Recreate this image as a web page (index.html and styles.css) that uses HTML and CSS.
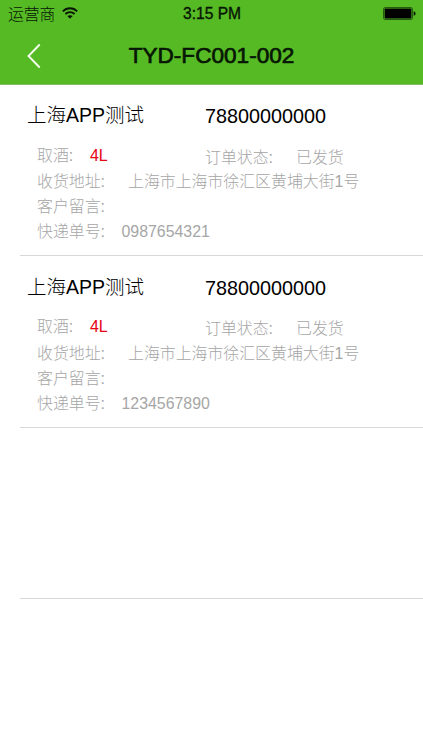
FILE: index.html
```html
<!DOCTYPE html>
<html lang="zh-CN">
<head>
<meta charset="utf-8">
<meta name="viewport" content="width=device-width, initial-scale=1">
<title>TYD-FC001-002</title>
<link rel="stylesheet" href="styles.css">
</head>
<body>
<header class="header">
  <div class="status">
    <div class="carrier">
      <span>运营商</span>
      <svg class="wifi" width="16" height="12" viewBox="0 0 16 12" fill="none" stroke="#071604" stroke-width="1.8">
        <path d="M.8 4.3C4.8.2 11.2.2 15.2 4.3M3.4 7C6 4.4 10 4.4 12.6 7"/>
        <path d="M8 11.7 5.4 9.1C6.8 7.8 9.2 7.8 10.6 9.1Z" fill="#071604" stroke="none"/>
      </svg>
    </div>
    <span class="time">3:15 PM</span>
    <svg class="battery" width="33" height="13" viewBox="0 0 33 13">
      <rect x=".5" y=".5" width="29" height="12" rx="1.7" fill="none" stroke="#245c10"/>
      <rect x="1.6" y="1.6" width="26.8" height="9.8" rx=".7" fill="#000"/>
      <path d="M30.7 4.3Q32.6 4.6 32.6 6.5T30.7 8.7Z" fill="#071604"/>
    </svg>
  </div>
  <nav class="nav">
    <svg class="back" width="14" height="26" viewBox="0 0 14 26" fill="none" stroke="#f4ffed" stroke-width="1.9">
      <path d="M12.7 1.5 1.5 13 12.7 24.5"/>
    </svg>
    <h1 class="title">TYD-FC001-002</h1>
  </nav>
</header>
<main class="list">
  <article class="order">
    <div class="row head"><span class="name">上海APP测试</span><span class="phone">78800000000</span></div>
    <div class="row wine"><span class="label short">取酒:</span><span class="amount">4L</span><span class="state">订单状态:</span><span class="sent">已发货</span></div>
    <div class="row"><span class="label">收货地址:</span><span class="address">上海市上海市徐汇区黄埔大街1号</span></div>
    <div class="row"><span class="label">客户留言:</span></div>
    <div class="row"><span class="label">快递单号:</span><span class="number">0987654321</span></div>
  </article>
  <article class="order">
    <div class="row head"><span class="name">上海APP测试</span><span class="phone">78800000000</span></div>
    <div class="row wine"><span class="label short">取酒:</span><span class="amount">4L</span><span class="state">订单状态:</span><span class="sent">已发货</span></div>
    <div class="row"><span class="label">收货地址:</span><span class="address">上海市上海市徐汇区黄埔大街1号</span></div>
    <div class="row"><span class="label">客户留言:</span></div>
    <div class="row"><span class="label">快递单号:</span><span class="number">1234567890</span></div>
  </article>
  <div class="order"></div>
</main>
</body>
</html>
```
FILE: styles.css
```css
* { box-sizing: border-box; }
body {
  margin: 0;
  height: 750px;
  overflow: hidden;
  background: #fff;
  color: #000;
  font-family: "Liberation Sans", "Noto Sans CJK SC", sans-serif;
  font-weight: 300;
}
.header {
  height: 85px;
  background: #56ba25;
  border-bottom: 1px solid #86b868;
}
.status {
  display: grid;
  grid-template-columns: 1fr auto 1fr;
  align-items: center;
  height: 28px;
  padding: 0 7px 0 8px;
  font-size: 15.8px;
  line-height: 28px;
  color: #071604;
}
.carrier { display: flex; align-items: center; gap: 7px; }
.carrier span { padding-top: 1px; line-height: 27px; }
.wifi { margin-top: -2px; }
.time { font-size: 15.6px; font-weight: 400; -webkit-text-stroke: .35px #071604; }
.battery { justify-self: end; margin-top: -1px; }
.nav {
  display: grid;
  grid-template-columns: 60px 1fr 60px;
  align-items: center;
  height: 56px;
}
.back { margin-left: 27px; }
.title {
  margin: 0;
  text-align: center;
  font-size: 22.6px;
  line-height: 56px;
  font-weight: 400;
  -webkit-text-stroke: .7px #071604;
  color: #071604;
  white-space: nowrap;
}
.list { margin-top: -.6px; }
.order {
  height: 171.6px;
  margin-left: 20px;
  padding: 16px 0 0 17px;
  border-bottom: 1px solid #d7d7d7;
}
.row {
  display: flex;
  height: 25px;
  line-height: 25px;
  font-size: 15.9px;
  color: #a6a6a6;
  white-space: nowrap;
}
.head {
  height: 30px;
  margin: 0 0 12.2px -10px;
  line-height: 30px;
  font-size: 19.5px;
  color: #000;
}
.name { width: 178px; }
.phone { font-size: 19.8px; padding-top: 1px; }
.wine { height: 26.4px; }
.label { width: 84.5px; }
.short { width: 53px; }
.amount { width: 115px; color: #e60012; }
.state { width: 91px; padding-top: 2px; }
.sent { padding-top: 2px; }
.address { padding-left: 6.5px; }
```
